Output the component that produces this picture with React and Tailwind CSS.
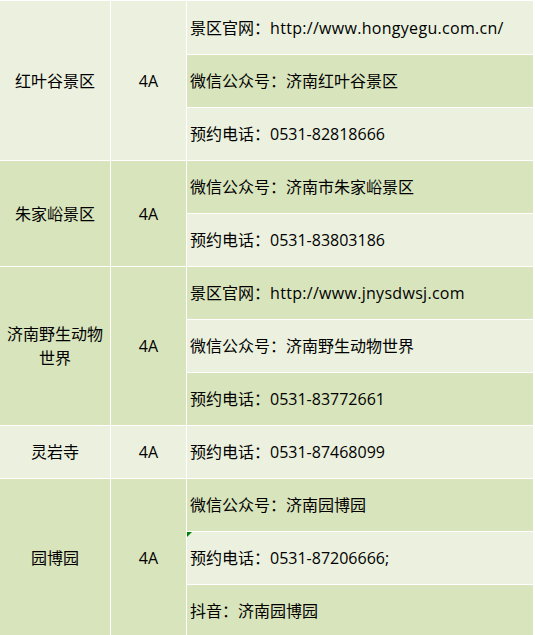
import React from 'react';

const spots = [
  {
    name: '红叶谷景区',
    level: '4A',
    items: ['景区官网：http://www.hongyegu.com.cn/', '微信公众号：济南红叶谷景区', '预约电话：0531-82818666'],
  },
  {
    name: '朱家峪景区',
    level: '4A',
    items: ['微信公众号：济南市朱家峪景区', '预约电话：0531-83803186'],
  },
  {
    name: '济南野生动物世界',
    level: '4A',
    items: ['景区官网：http://www.jnysdwsj.com', '微信公众号：济南野生动物世界', '预约电话：0531-83772661'],
  },
  {
    name: '灵岩寺',
    level: '4A',
    items: ['预约电话：0531-87468099'],
  },
  {
    name: '园博园',
    level: '4A',
    items: ['微信公众号：济南园博园', '预约电话：0531-87206666;', '抖音：济南园博园'],
  },
];

const spans = { 1: 'row-span-1', 2: 'row-span-2', 3: 'row-span-3' };
const tone = (i) => (i % 2 === 0 ? 'bg-[#ebf1de]' : 'bg-[#d8e4bc]');

const Line = ({ text }) => {
  const idx = text.indexOf('http');
  if (idx < 0) return text;
  return (
    <>
      {text.slice(0, idx)}
      <span className="tracking-[0.3px]">{text.slice(idx)}</span>
    </>
  );
};

const App = () => {
  let row = 0;
  const cells = [];
  spots.forEach((spot, si) => {
    const start = row;
    cells.push(
      <div
        key={`n${si}`}
        className={`${spans[spot.items.length]} ${tone(start)} col-start-1 flex items-center justify-center px-1 text-center leading-6`}
      >
        {spot.name}
      </div>
    );
    cells.push(
      <div
        key={`l${si}`}
        className={`${spans[spot.items.length]} ${tone(start)} col-start-2 flex items-center justify-center`}
      >
        {spot.level}
      </div>
    );
    spot.items.forEach((text, ii) => {
      const flag = si === 4 && ii === 1;
      cells.push(
        <div key={`i${si}-${ii}`} className={`${tone(row)} relative col-start-3 flex items-center pl-[3px] whitespace-nowrap`}>
          {flag && (
            <span className="absolute left-0 top-0 h-0 w-0 border-t-[5px] border-r-[5px] border-t-[#008000] border-r-transparent" />
          )}
          <Line text={text} />
        </div>
      );
      row += 1;
    });
  });

  return (
    <div
      className="w-[535px] h-[635px] overflow-hidden bg-white pt-px text-[16px] text-black"
      style={{ fontFamily: '"Open Sans", "Noto Sans CJK SC", sans-serif' }}
    >
      <div className="grid grid-cols-[110px_75px_346px] grid-rows-[53px] auto-rows-[52px] gap-px">{cells}</div>
    </div>
  );
};

export default App;
